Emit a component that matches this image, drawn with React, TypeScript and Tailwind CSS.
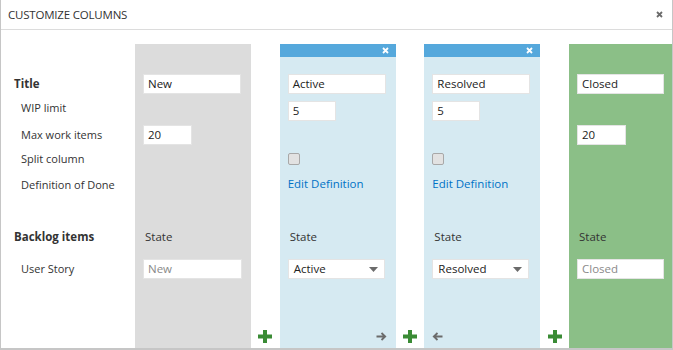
import React from 'react';

const font = { fontFamily: '"Open Sans", "Noto Sans", Arial, sans-serif' };

function Plus() {
  return (
    <svg width="14" height="13" viewBox="0 0 14 13">
      <rect x="5" y="0" width="4" height="13" fill="#3a8b35" />
      <rect x="0" y="4.5" width="14" height="4" fill="#3a8b35" />
    </svg>
  );
}

function Arrow({ dir }: { dir: 'left' | 'right' }) {
  return (
    <svg width="11" height="9" viewBox="0 0 11 9" className={dir === 'left' ? 'rotate-180' : ''}>
      <path d="M0.5 4.5H9M5.5 1L9.2 4.5L5.5 8" stroke="#6b6b6b" strokeWidth="1.8" fill="none" />
    </svg>
  );
}

function XMark({ color, size = 7 }: { color: string; size?: number }) {
  return (
    <svg width={size} height={size} viewBox="0 0 7 7">
      <path d="M1 1L6 6M6 1L1 6" stroke={color} strokeWidth="1.8" />
    </svg>
  );
}

function TextBox({ value, w, muted }: { value: string; w: string; muted?: boolean }) {
  return (
    <div className={`${w} h-[20px] bg-white border border-[#e4e4e4] flex items-center px-[4px] text-[11.5px] ${muted ? 'text-[#8a8a8a]' : 'text-[#222]'}`}>
      {value}
    </div>
  );
}

function Dropdown({ value }: { value: string }) {
  return (
    <div className="w-[97px] h-[20px] bg-white border border-[#e4e4e4] flex items-center justify-between pl-[5px] pr-[6px] text-[11.5px] text-[#222]">
      <span>{value}</span>
      <svg width="9" height="5" viewBox="0 0 9 5">
        <path d="M0 0H9L4.5 5Z" fill="#6b6b6b" />
      </svg>
    </div>
  );
}

function Checkbox() {
  return <div className="w-[12px] h-[12px] rounded-[2px] border border-[#a8a8a8] bg-[#e2e2e2]" />;
}

type Col = {
  name: string;
  bg: string;
  header: boolean;
  wip?: string;
  max?: string;
  split?: boolean;
  state: string;
  dropdown?: boolean;
  width: string;
  left?: boolean;
  right?: boolean;
};

const cols: Col[] = [
  { name: 'New', bg: 'bg-[#dcdcdc]', header: false, max: '20', state: 'New', width: 'w-[116px]' },
  { name: 'Active', bg: 'bg-[#d6eaf2]', header: true, wip: '5', split: true, state: 'Active', dropdown: true, width: 'w-[116px]', right: true },
  { name: 'Resolved', bg: 'bg-[#d6eaf2]', header: true, wip: '5', split: true, state: 'Resolved', dropdown: true, width: 'w-[116px]', left: true },
  { name: 'Closed', bg: 'bg-[#8bbf87]', header: false, max: '20', state: 'Closed', width: 'w-[103px]' },
];

function Column({ c }: { c: Col }) {
  return (
    <div className={`${c.width} ${c.bg} flex flex-col px-[8px]`}>
      <div className={`h-[13px] -mx-[8px] flex items-center justify-end pr-[7px] ${c.header ? 'bg-[#55a8dc]' : ''}`}>
        {c.header && <XMark color="#fff" />}
      </div>
      <div className="h-[14px]" />
      <div className="h-[26px] flex items-center"><TextBox value={c.name} w={c.name === 'Closed' ? 'w-[87px]' : 'w-[98px]'} /></div>
      <div className="h-[27px] flex items-center">{c.wip && <TextBox value={c.wip} w="w-[48px]" />}</div>
      <div className="h-[22px] flex items-center">{c.max && <TextBox value={c.max} w="w-[49px]" />}</div>
      <div className="h-[26px] flex items-center">{c.split && <Checkbox />}</div>
      <div className="h-[26px] flex items-center text-[11.5px] text-[#0072c6] pb-[3px]">{c.split && 'Edit Definition'}</div>
      <div className="h-[26px]" />
      <div className="h-[26px] flex items-center pl-[2px] text-[11.5px] text-[#333]">State</div>
      <div className="h-[38px] flex items-center">
        {c.dropdown ? <Dropdown value={c.state} /> : <TextBox value={c.state} w={c.name === 'Closed' ? 'w-[87px]' : 'w-[99px]'} muted />}
      </div>
      <div className="flex-1 flex items-end pb-[7px]">
        {c.right && <div className="w-full flex justify-end pr-[1px]"><Arrow dir="right" /></div>}
        {c.left && <Arrow dir="left" />}
      </div>
    </div>
  );
}

function Gap() {
  return (
    <div className="flex-1 flex items-end justify-center pb-[5px]">
      <Plus />
    </div>
  );
}

export default function App() {
  return (
    <div style={font} className="w-[673px] h-[350px] bg-white border-l border-r border-b-2 border-[#c6c6c6] flex flex-col overflow-hidden">
      <div className="h-[30px] border-b border-[#dcdcdc] flex items-center justify-between pl-[7px] pr-[9px] shrink-0">
        <span className="text-[11.5px] text-[#333] tracking-[-0.2px]">CUSTOMIZE COLUMNS</span>
        <XMark color="#6b6b6b" />
      </div>
      <div className="flex-1 flex pt-[14px]">
        <div className="w-[134px] shrink-0 flex flex-col text-[11px] text-[#333]">
          <div className="h-[27px]" />
          <div className="h-[26px] flex items-center pl-[13px] font-bold text-[11.5px]">Title</div>
          <div className="h-[27px] flex items-center pl-[20px] pb-[4px]">WIP limit</div>
          <div className="h-[22px] flex items-center pl-[20px]">Max work items</div>
          <div className="h-[26px] flex items-center pl-[20px]">Split column</div>
          <div className="h-[26px] flex items-center pl-[20px]">Definition of Done</div>
          <div className="h-[26px]" />
          <div className="h-[26px] flex items-center pl-[13px] font-bold text-[11.5px]">Backlog items</div>
          <div className="h-[38px] flex items-center pl-[20px]">User Story</div>
        </div>
        <Column c={cols[0]} />
        <Gap />
        <Column c={cols[1]} />
        <Gap />
        <Column c={cols[2]} />
        <Gap />
        <Column c={cols[3]} />
      </div>
    </div>
  );
}
